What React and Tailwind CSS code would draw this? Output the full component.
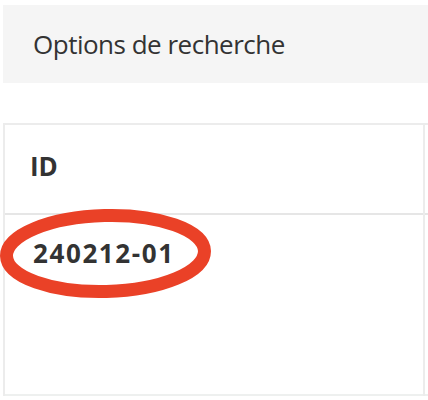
import React from "react";

export default function App() {
  const font = { fontFamily: '"Open Sans", "Noto Sans", Arial, sans-serif' };
  return (
    <div className="relative w-[428px] h-[400px] overflow-hidden bg-white text-[#333333]" style={font}>
      <div className="ml-[3px] mt-[5px] h-[78px] bg-[#f5f5f5] flex items-center pl-[30px]">
        <span className="text-[26px] leading-[26px] tracking-[-0.5px]">Options de recherche</span>
      </div>
      <div className="ml-[3px] mt-[40px] flex w-[600px]">
        <div className="w-[422px] flex flex-col border-t-2 border-l-2 border-r-2 border-[#ececec]">
          <div className="h-[90px] border-b-2 border-[#e6e6e6] pl-[25px] pt-[28px]">
            <span className="block text-[26px] leading-[26px] font-bold">ID</span>
          </div>
          <div className="h-[181px] border-b-2 border-[#eef0ef] pl-[28px] pt-[25px]">
            <span className="block text-[26px] leading-[26px] font-bold tracking-[1.6px]">240212-01</span>
          </div>
        </div>
        <div className="flex-1 flex flex-col border-t-2 border-[#ececec]">
          <div className="h-[90px] border-b-2 border-[#e6e6e6]" />
          <div className="h-[181px] border-b-2 border-[#eef0ef]" />
        </div>
      </div>
      <svg className="absolute left-0 top-[200px]" width="230" height="110" viewBox="0 200 230 110">
        <ellipse cx="105.5" cy="253.5" rx="99" ry="38" fill="none" stroke="#ea4127" strokeWidth="13" transform="rotate(-1.5 105.5 253.5)" />
      </svg>
    </div>
  );
}
